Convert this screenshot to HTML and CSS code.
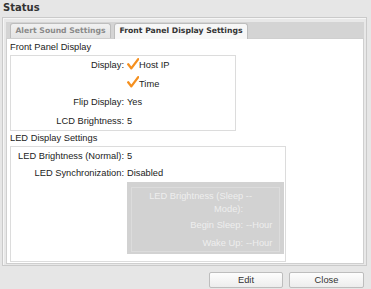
FILE: index.html
```html
<!DOCTYPE html>
<html>
<head>
<meta charset="utf-8">
<link rel="stylesheet" href="styles.css">
</head>
<body>
<div class="title">Status</div>
<div class="panel">
  <div class="tabs">
    <div class="tab tab-a">Alert Sound Settings</div>
    <div class="tab tab-b active">Front Panel Display Settings</div>
  </div>
  <div class="content">
    <div class="legend">Front Panel Display</div>
    <div class="box box1">
      <div class="row"><span class="lbl">Display:</span><span class="val"><svg class="check" width="12" height="12" viewBox="0 0 12 12"><path d="M1.2 6.3 L4.3 10.4 L11.2 1.2" fill="none" stroke="#f5901f" stroke-width="2.3" stroke-linecap="round" stroke-linejoin="round"/></svg>Host IP</span></div>
      <div class="row"><span class="lbl"></span><span class="val"><svg class="check" width="12" height="12" viewBox="0 0 12 12"><path d="M1.2 6.3 L4.3 10.4 L11.2 1.2" fill="none" stroke="#f5901f" stroke-width="2.3" stroke-linecap="round" stroke-linejoin="round"/></svg>Time</span></div>
      <div class="row"><span class="lbl">Flip Display:</span><span class="val">Yes</span></div>
      <div class="row"><span class="lbl">LCD Brightness:</span><span class="val">5</span></div>
    </div>
    <div class="legend legend2">LED Display Settings</div>
    <div class="box box2">
      <div class="row row2"><span class="lbl">LED Brightness (Normal):</span><span class="val">5</span></div>
      <div class="row row2"><span class="lbl">LED Synchronization:</span><span class="val">Disabled</span></div>
      <div class="disabled">
        <div class="dis-inner">
          <div class="drow drow-tall"><span class="dlbl"><span class="l1">LED Brightness (Sleep --</span><span class="l2">Mode):</span></span><span class="dval"></span></div>
          <div class="drow"><span class="dlbl">Begin Sleep:</span><span class="dval">--Hour</span></div>
          <div class="drow"><span class="dlbl">Wake Up:</span><span class="dval">--Hour</span></div>
        </div>
      </div>
    </div>
  </div>
</div>
<div class="buttons">
  <button class="btn btn-edit">Edit</button>
  <button class="btn btn-close">Close</button>
</div>
</body>
</html>
```

FILE: styles.css
```css
html, body {
  margin: 0;
  padding: 0;
}
body {
  width: 371px;
  height: 289px;
  background: #e6e6e6;
  font-family: "Liberation Sans", Arial, sans-serif;
  font-size: 9.3px;
  color: #222;
  overflow: hidden;
}
.title {
  height: 17px;
  line-height: 16px;
  padding-left: 3px;
  font-family: "DejaVu Sans", Verdana, sans-serif;
  font-weight: bold;
  font-size: 10px;
  color: #333;
  box-sizing: border-box;
}
.panel {
  margin-left: 2px;
  width: 365px;
  height: 249px;
  box-sizing: border-box;
  border: 1px solid #cacaca;
  box-shadow: inset 1px 1px 0 #f6f6f6;
  padding: 4px 2px 1px 3px;
  background: #e8e8e8;
}
.tabs {
  height: 16px;
  background: #d4d4d4;
  display: flex;
  align-items: flex-end;
  padding-left: 4px;
  gap: 3px;
  box-sizing: border-box;
}
.tab {
  height: 15px;
  box-sizing: border-box;
  border: 1px solid #bdbdbd;
  border-bottom: none;
  border-radius: 3px 3px 0 0;
  font-family: "DejaVu Sans", Verdana, sans-serif;
  font-weight: bold;
  font-size: 7.7px;
  line-height: 14px;
  text-align: center;
  white-space: nowrap;
}
.tab-a {
  width: 101px;
  background: linear-gradient(#f1f1f1, #e3e3e3);
  color: #8a8a8a;
}
.tab-b {
  width: 134px;
  background: #f7f7f7;
  color: #333;
  position: relative;
  height: 16px;
  margin-bottom: -1px;
}
.content {
  height: 226px;
  box-sizing: border-box;
  background: #fff;
  border: 1px solid #cfcfcf;
  padding: 0 3px 1px 3px;
}
.legend {
  height: 16px;
  line-height: 16px;
  color: #222;
}
.legend2 {
  height: 15px;
  line-height: 15px;
}
.box {
  box-sizing: border-box;
  border: 1px solid #dcdcdc;
}
.box1 {
  width: 226px;
  height: 76px;
}
.box2 {
  width: 276px;
  height: 116px;
}
.row {
  display: flex;
  align-items: center;
  height: 18.5px;
}
.row2 {
  height: 17.5px;
}
.lbl {
  width: 116px;
  flex: none;
  text-align: right;
  padding-right: 3px;
  box-sizing: border-box;
  white-space: nowrap;
}
.val {
  display: flex;
  align-items: center;
  white-space: nowrap;
}
.check {
  display: block;
  margin-right: 0;
  margin-top: -3px;
}
.disabled {
  margin-left: 116px;
  width: 157px;
  height: 72px;
  box-sizing: border-box;
  background: #d2d2d2;
  padding: 5px 4px 2px 4px;
}
.dis-inner {
  height: 100%;
  box-sizing: border-box;
  border: 1px solid #dcdcdc;
  padding-top: 2px;
  color: #eeeeee;
}
.drow {
  display: flex;
  align-items: center;
  height: 18px;
}
.drow-tall {
  height: 26px;
  align-items: stretch;
}
.dlbl {
  width: 111px;
  flex: none;
  text-align: right;
  white-space: nowrap;
}
.drow-tall .dlbl {
  display: flex;
  flex-direction: column;
  align-items: flex-end;
  line-height: 13px;
}
.l1 {
  margin-right: -9px;
}
.dval {
  margin-left: 3px;
  white-space: nowrap;
}
.buttons {
  display: flex;
  justify-content: flex-end;
  gap: 6px;
  padding-right: 7px;
  margin-top: 6px;
}
.btn {
  height: 16px;
  box-sizing: border-box;
  border: 1px solid #bdbdbd;
  border-radius: 2px;
  background: linear-gradient(#fdfdfd, #ededed);
  font-family: "Liberation Sans", Arial, sans-serif;
  font-size: 9.3px;
  color: #333;
  padding: 0;
  margin: 0;
  line-height: 14px;
}
.btn-edit {
  width: 74px;
}
.btn-close {
  width: 75px;
}
```
